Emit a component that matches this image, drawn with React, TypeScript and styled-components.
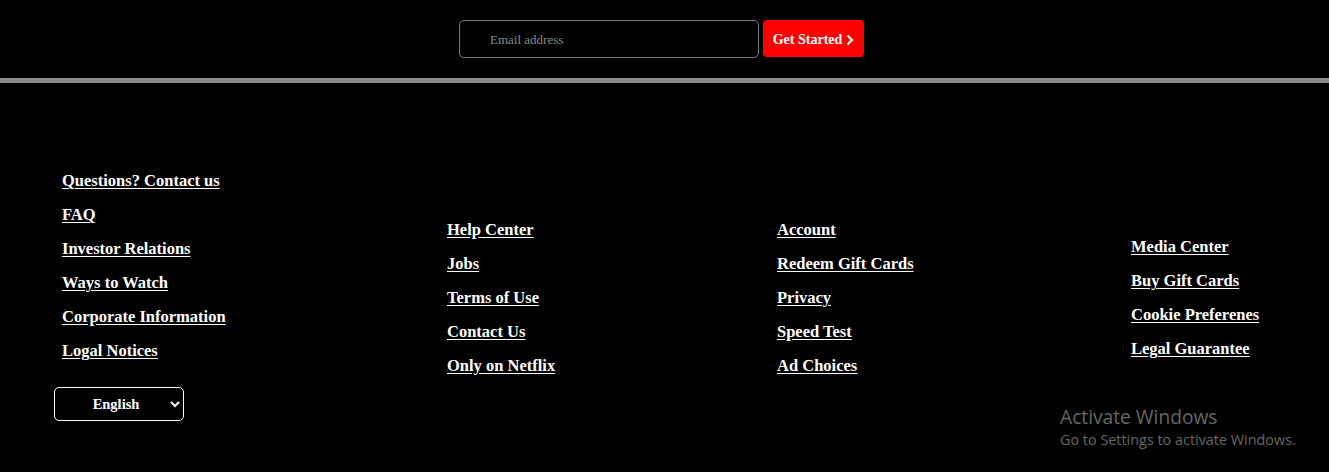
import React from "react";
import styled, { createGlobalStyle } from "styled-components";

const GlobalStyle = createGlobalStyle`
  html, body { margin: 0; padding: 0; background: #000; }
  body { font-family: "Liberation Serif", "DejaVu Serif", serif; color: #fff; }
  * { box-sizing: border-box; }
`;

const Page = styled.div`
  position: relative;
  width: 100%;
  min-height: 472px;
  background: #000;
  overflow: hidden;
`;

const SignupBar = styled.form`
  display: flex;
  justify-content: center;
  align-items: flex-start;
  gap: 4px;
  padding: 20px 6px 20px 0;
  border-bottom: 5px solid #878787;
`;

const EmailInput = styled.input`
  width: 300px;
  height: 38px;
  padding: 2px 0 0 30px;
  background: #000;
  border: 1px solid #7a7a7a;
  border-radius: 5px;
  color: #fff;
  font-family: "Liberation Serif", serif;
  font-size: 13px;
  outline: none;
  &::placeholder { color: #8a8a8a; }
`;

const StartButton = styled.button`
  display: flex;
  align-items: center;
  gap: 4px;
  height: 37px;
  width: 101px;
  justify-content: center;
  background: #ff0000;
  border: none;
  border-radius: 4px;
  color: #fff;
  font-family: "Liberation Serif", serif;
  font-size: 14px;
  font-weight: bold;
  padding: 2px 0 0;
  cursor: pointer;
`;

const FooterGrid = styled.footer`
  display: grid;
  grid-template-columns: 393px 330px 354px 1fr;
  align-items: center;
  padding: 88px 0 40px 54px;
`;

const Column = styled.div<{ $offset?: number }>`
  display: flex;
  flex-direction: column;
  align-items: flex-start;
  padding-top: ${(p) => p.$offset ?? 0}px;
`;

const LinkList = styled.ul<{ $indent?: number }>`
  list-style: none;
  margin: 0;
  padding: 0 0 0 ${(p) => p.$indent ?? 0}px;
  display: flex;
  flex-direction: column;
  gap: 15px;
`;

const FooterLink = styled.a`
  display: block;
  color: #fff;
  font-size: 16.5px;
  font-weight: bold;
  line-height: 19px;
  text-decoration: underline;
  text-underline-offset: 2px;
  white-space: nowrap;
`;

const LangSelect = styled.select`
  margin-top: 27px;
  width: 130px;
  height: 34px;
  background: #000;
  color: #fff;
  border: 1px solid #fff;
  border-radius: 5px;
  font-family: "Liberation Serif", serif;
  font-weight: bold;
  font-size: 14.5px;
  text-align: center;
  text-align-last: center;
  padding: 0 4px 0 10px;
`;

const Watermark = styled.div`
  position: absolute;
  left: 1060px;
  top: 405px;
  color: #676767;
  font-family: "Open Sans", "Noto Sans", sans-serif;
  pointer-events: none;
`;

const WatermarkTitle = styled.div`
  font-size: 19.2px;
  line-height: 24px;
`;

const WatermarkSub = styled.div`
  font-size: 14.4px;
  line-height: 20px;
  margin-top: 1px;
`;

const columns: string[][] = [
  ["Help Center", "Jobs", "Terms of Use", "Contact Us", "Only on Netflix"],
  ["Account", "Redeem Gift Cards", "Privacy", "Speed Test", "Ad Choices"],
  ["Media Center", "Buy Gift Cards", "Cookie Preferenes", "Legal Guarantee"],
];

const firstColumn = [
  "Questions? Contact us",
  "FAQ",
  "Investor Relations",
  "Ways to Watch",
  "Corporate Information",
  "Logal Notices",
];

const Chevron = () => (
  <svg width="8" height="12" viewBox="0 0 8 12" aria-hidden="true">
    <path d="M1.5 1.5 L6 6 L1.5 10.5" fill="none" stroke="#fff" strokeWidth="2.2" />
  </svg>
);

export default function App() {
  return (
    <Page>
      <GlobalStyle />
      <SignupBar onSubmit={(e) => e.preventDefault()}>
        <EmailInput type="email" placeholder="Email address" />
        <StartButton type="submit">
          Get Started <Chevron />
        </StartButton>
      </SignupBar>
      <FooterGrid>
        <Column>
          <LinkList $indent={8}>
            {firstColumn.map((t) => (
              <li key={t}>
                <FooterLink href="#">{t}</FooterLink>
              </li>
            ))}
          </LinkList>
          <LangSelect defaultValue="English">
            <option>English</option>
            <option>Hindi</option>
          </LangSelect>
        </Column>
        {columns.map((col, i) => (
          <Column key={i} $offset={3}>
            <LinkList>
              {col.map((t) => (
                <li key={t}>
                  <FooterLink href="#">{t}</FooterLink>
                </li>
              ))}
            </LinkList>
          </Column>
        ))}
      </FooterGrid>
      <Watermark>
        <WatermarkTitle>Activate Windows</WatermarkTitle>
        <WatermarkSub>Go to Settings to activate Windows.</WatermarkSub>
      </Watermark>
    </Page>
  );
}
